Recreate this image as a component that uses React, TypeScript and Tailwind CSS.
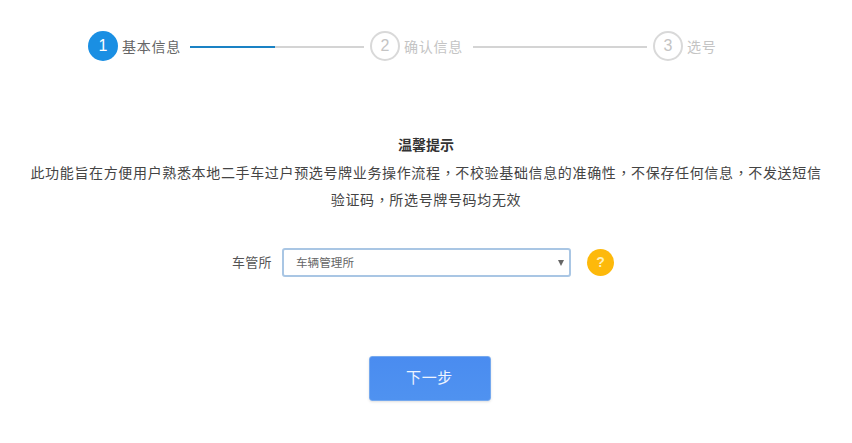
import React from 'react';

const font = "font-['Liberation_Sans','Noto_Sans_CJK_SC',sans-serif]";

const Comma = () => <span className="inline-block w-[14.65px] leading-none tracking-normal font-['Noto_Sans_CJK_TC',sans-serif]">，</span>;

const Step: React.FC<{ n: number; label: string; active?: boolean }> = ({ n, label, active }) => (
  <div className="flex items-center">
    {active ? (
      <div className="w-[30px] h-[30px] rounded-full bg-[#1a8fe3] text-white text-[16px] flex items-center justify-center">{n}</div>
    ) : (
      <div className="w-[30px] h-[30px] rounded-full border-2 border-[#d9d9d9] text-[#c4c4c4] text-[16px] flex items-center justify-center">{n}</div>
    )}
    <span className={active ? 'ml-[4px] pt-[2px] text-[14px] tracking-[0.75px] text-[#666666]' : 'ml-[4px] pt-[2px] text-[14px] tracking-[0.75px] text-[#c4c4c4]'}>{label}</span>
  </div>
);

export default function App() {
  return (
    <div className={`${font} w-[852px] h-[443px] bg-white overflow-hidden`}>
      <div className="pt-[31px] pl-[88px] flex items-center">
        <Step n={1} label="基本信息" active />
        <div className="ml-[9px] mt-[1px] w-[174px] h-[2px] bg-[#d4d4d4]">
          <div className="w-[85px] h-[2px] bg-[#1a82c4]" />
        </div>
        <div className="ml-[6px]"><Step n={2} label="确认信息" /></div>
        <div className="ml-[10px] mt-[1px] w-[174px] h-[2px] bg-[#d4d4d4]" />
        <div className="ml-[6px]"><Step n={3} label="选号" /></div>
      </div>

      <div className="mt-[70px] text-center text-[14px] text-[#444444]">
        <div className="font-bold leading-[28px] text-[#333333]">温馨提示</div>
        <div className="mx-auto w-[800px] pt-[1px] leading-[27px] tracking-[0.65px]">
          <div>此功能旨在方便用户熟悉本地二手车过户预选号牌业务操作流程<Comma />不校验基础信息的准确性<Comma />不保存任何信息<Comma />不发送短信</div>
          <div>验证码<Comma />所选号牌号码均无效</div>
        </div>
      </div>

      <div className="mt-[34px] pl-[232px] flex items-center">
        <span className="w-[40px] whitespace-nowrap text-[13px] tracking-[0.3px] text-[#555555]">车管所</span>
        <div className="ml-[10px] w-[289px] h-[29px] border-2 border-[#a9c6e4] rounded-[3px] flex items-center justify-between pl-[12px] pr-[5px]">
          <span className="text-[11.6px] text-[#666666]">车辆管理所</span>
          <svg width="6" height="6" viewBox="0 0 6 6"><path d="M0 0h6L3 6z" fill="#666666" /></svg>
        </div>
        <div className="ml-[16px] w-[27px] h-[27px] rounded-full bg-[#fdb90b] text-[#fff0b8] text-[14px] font-bold flex items-center justify-center">?</div>
      </div>

      <div className="mt-[79px] flex justify-center">
        <button className="ml-[7px] w-[122px] h-[45px] rounded-[3px] bg-gradient-to-b from-[#4a8cf0] to-[#4f92f0] border border-[#76a9ee] shadow-sm text-[#eef4ff] text-[15px] tracking-[0.6px]">下一步</button>
      </div>
    </div>
  );
}
